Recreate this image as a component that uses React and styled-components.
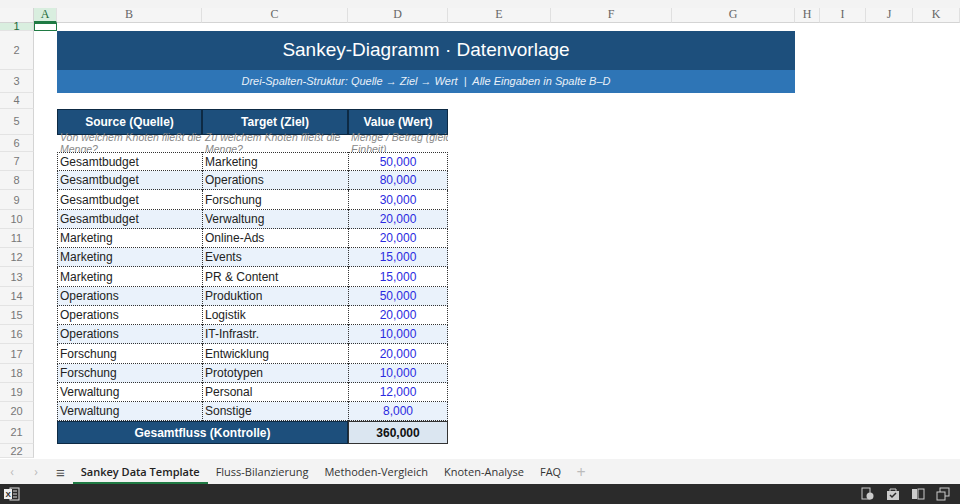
import React from "react";
import styled, { createGlobalStyle } from "styled-components";

const G = createGlobalStyle`
  html,body{margin:0;padding:0;background:#fff;overflow:hidden;}
  body{font-family:"Liberation Sans",Arial,sans-serif;}
`;
const Page = styled.div`width:960px;height:504px;display:flex;flex-direction:column;background:#fff;`;
const TopStrip = styled.div`height:8px;background:#f3f3f3;`;
const COLS = "34px 23px 145px 146px 100px 103px 121px 123px 25px 46px 47px 47px";
const ROWS = "15px 8px 39px 23px 16px 26px 17px repeat(14, 19.25px) 23px 14px";
const Sheet = styled.div`
  display:grid;grid-template-columns:${COLS};grid-template-rows:${ROWS};
  height:458.5px;overflow:hidden;position:relative;
`;
const ColHead = styled.div`
  background:#f5f5f5;border-bottom:1px solid #d4d4d4;border-right:1px solid #e0e0e0;
  font-family:"Liberation Serif",serif;font-size:12px;color:#666;display:flex;align-items:center;justify-content:center;
  ${p=>p.$sel&&`background:#d9eedf;color:#1d6b3a;border-bottom:2px solid #1f7a43;`}
`;
const RowHead = styled.div`
  grid-column:1;background:#f5f5f5;border-right:1px solid #d4d4d4;border-bottom:1px solid #e3e3e3;
  font-size:11px;color:#777;display:flex;align-items:center;justify-content:center;
  ${p=>p.$sel&&`background:#d9eedf;color:#1d6b3a;`}
`;
const Corner = styled.div`background:#f5f5f5;border-right:1px solid #d4d4d4;border-bottom:1px solid #d4d4d4;`;
const Title = styled.div`
  grid-column:3 / 9;background:#1d4f7c;color:#fff;font-size:19px;display:flex;align-items:center;justify-content:center;
`;
const Sub = styled.div`
  grid-column:3 / 9;background:#2e75b6;color:#e8f0f8;font-size:11px;font-style:italic;display:flex;align-items:center;justify-content:center;
`;
const Head = styled.div`
  background:#1d4f7c;color:#fff;font-size:12px;font-weight:bold;display:flex;align-items:center;justify-content:center;
  border:1px solid #0d2a44;
`;
const Hint = styled.div`
  font-size:10.5px;font-style:italic;color:#888;line-height:12px;overflow:hidden;padding:0 3px;white-space:nowrap;
  margin-top:-4px;
`;
const Cell = styled.div`
  background:${p=>p.$alt?"#eaf2fb":"#fff"};border-left:1px dotted #333;border-bottom:1px dotted #333;
  ${p=>p.$last&&"border-right:1px dotted #333;"}
  font-size:12px;color:${p=>p.$num?"#2a2ae0":"#222"};display:flex;align-items:center;
  justify-content:${p=>p.$num?"center":"flex-start"};padding:0 2px;
`;
const Total = styled.div`
  grid-column:3 / 5;background:#1d4f7c;color:#fff;font-weight:bold;font-size:12px;display:flex;align-items:center;justify-content:center;border:1px solid #0d2a44;
`;
const TotalVal = styled.div`
  background:#dbe6f1;font-weight:bold;font-size:12px;color:#111;display:flex;align-items:center;justify-content:center;border:1px solid #333;
`;
const SelBox = styled.div`grid-column:2;grid-row:2;border:1.5px solid #1f7a43;`;
const Tabs = styled.div`
  height:26px;background:#f3f3f3;display:flex;align-items:center;font-family:"Open Sans","Noto Sans",sans-serif;font-size:11px;color:#333;
`;
const Arrow = styled.span`color:#bbb;width:24px;text-align:center;font-size:12px;`;
const Tab = styled.div`
  padding:0 8px;height:100%;display:flex;align-items:center;
  ${p=>p.$on&&"font-weight:600;color:#222;box-shadow:inset 0 -2px 0 #1f7a43;"}
`;
const Task = styled.div`height:20px;background:#2b2b2b;display:flex;align-items:center;padding:0 4px;`;
const Spacer = styled.div`flex:1;`;
const Ico = styled.svg`margin-left:11px;`;

const data = [
["Gesamtbudget","Marketing","50,000"],["Gesamtbudget","Operations","80,000"],["Gesamtbudget","Forschung","30,000"],["Gesamtbudget","Verwaltung","20,000"],
["Marketing","Online-Ads","20,000"],["Marketing","Events","15,000"],["Marketing","PR & Content","15,000"],
["Operations","Produktion","50,000"],["Operations","Logistik","20,000"],["Operations","IT-Infrastr.","10,000"],
["Forschung","Entwicklung","20,000"],["Forschung","Prototypen","10,000"],["Verwaltung","Personal","12,000"],["Verwaltung","Sonstige","8,000"]];

export default function App(){
  const cols=["A","B","C","D","E","F","G","H","I","J","K"];
  return <Page><G/><TopStrip/>
    <Sheet>
      <Corner/>
      {cols.map(c=><ColHead key={c} $sel={c==="A"}>{c}</ColHead>)}
      {Array.from({length:22},(_,i)=><RowHead key={i} $sel={i===0} style={{gridRow:i+2}}>{i+1}</RowHead>)}
      <SelBox/>
      <Title style={{gridRow:3}}>Sankey-Diagramm · Datenvorlage</Title>
      <Sub style={{gridRow:4}}>Drei-Spalten-Struktur: Quelle → Ziel → Wert &nbsp;|&nbsp; Alle Eingaben in Spalte B–D</Sub>
      <Head style={{gridRow:6,gridColumn:3}}>Source (Quelle)</Head>
      <Head style={{gridRow:6,gridColumn:4}}>Target (Ziel)</Head>
      <Head style={{gridRow:6,gridColumn:5}}>Value (Wert)</Head>
      <Hint style={{gridRow:7,gridColumn:3}}>Von welchem Knoten fließt die<br/>Menge?</Hint>
      <Hint style={{gridRow:7,gridColumn:4}}>Zu welchem Knoten fließt die<br/>Menge?</Hint>
      <Hint style={{gridRow:7,gridColumn:5}}>Menge / Betrag (gleiche<br/>Einheit)</Hint>
      {data.map((r,i)=>[
        <Cell key={i+"a"} $alt={i%2===1} style={{gridRow:i+8,gridColumn:3,borderTop:i===0?"1px dotted #333":undefined}}>{r[0]}</Cell>,
        <Cell key={i+"b"} $alt={i%2===1} style={{gridRow:i+8,gridColumn:4,borderTop:i===0?"1px dotted #333":undefined}}>{r[1]}</Cell>,
        <Cell key={i+"c"} $alt={i%2===1} $num $last style={{gridRow:i+8,gridColumn:5,borderTop:i===0?"1px dotted #333":undefined}}>{r[2]}</Cell>
      ])}
      <Total style={{gridRow:22}}>Gesamtfluss (Kontrolle)</Total>
      <TotalVal style={{gridRow:22,gridColumn:5}}>360,000</TotalVal>
    </Sheet>
    <Tabs>
      <Arrow>‹</Arrow><Arrow>›</Arrow>
      <Tab style={{fontSize:15,color:"#555"}}>≡</Tab>
      <Tab $on>Sankey Data Template</Tab><Tab>Fluss-Bilanzierung</Tab><Tab>Methoden-Vergleich</Tab><Tab>Knoten-Analyse</Tab><Tab>FAQ</Tab>
      <Arrow style={{fontSize:16}}>+</Arrow>
    </Tabs>
    <Task>
      <svg width="16" height="14" viewBox="0 0 16 14"><rect x="6" y="1" width="9" height="12" fill="none" stroke="#ddd"/><path d="M9 4h4M9 7h4M9 10h4" stroke="#ddd"/><rect x="0" y="2" width="8" height="10" fill="#eee"/><text x="1.5" y="10" fontSize="8" fontWeight="bold" fill="#2b2b2b" fontFamily="Liberation Sans">X</text></svg>
      <Spacer/>
      <Ico width="14" height="14" viewBox="0 0 14 14"><rect x="1" y="1" width="8" height="11" fill="none" stroke="#ccc"/><circle cx="9" cy="9" r="3.5" fill="#ccc"/></Ico>
      <Ico width="14" height="14" viewBox="0 0 14 14"><rect x="1" y="4" width="12" height="9" fill="#ccc"/><path d="M4 4V2h6v2" stroke="#ccc" fill="none"/><path d="M4 8l2 2 4-4" stroke="#2b2b2b" strokeWidth="1.5" fill="none"/></Ico>
      <Ico width="14" height="14" viewBox="0 0 14 14"><rect x="1" y="2" width="5" height="10" fill="#ccc"/><rect x="7" y="2" width="6" height="10" fill="none" stroke="#ccc"/></Ico>
      <Ico width="14" height="14" viewBox="0 0 14 14" style={{marginRight:6}}><rect x="4" y="1" width="9" height="8" fill="none" stroke="#ccc"/><rect x="1" y="5" width="8" height="8" fill="#2b2b2b" stroke="#ccc"/></Ico>
    </Task>
  </Page>;
}
